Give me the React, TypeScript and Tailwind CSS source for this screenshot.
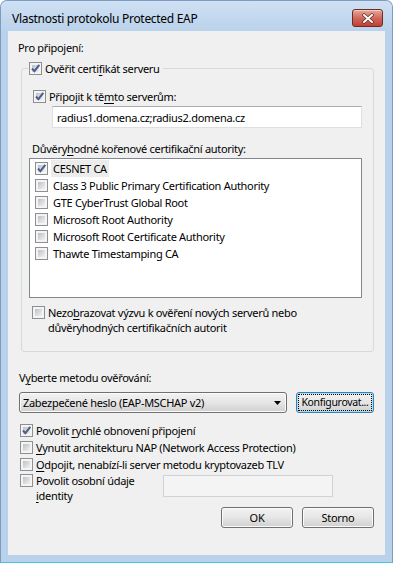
import type { ReactNode } from "react";

function CheckBox({ checked = false }: { checked?: boolean }) {
  return (
    <span className="relative flex h-[13px] w-[13px] shrink-0 border border-[#8e8f8f] bg-[#f4f4f4] p-[2px]">
      <span className="flex-1 bg-gradient-to-br from-[#bcc1c8] to-[#f2f2f3]" />
      {checked && (
        <svg className="absolute -left-[1px] -top-[1px]" width="13" height="13" viewBox="0 0 13 13">
          <path d="M3 6.5 L5.4 9.2 L10.3 2.8" fill="none" stroke="#4b5e8e" strokeWidth="2" />
        </svg>
      )}
    </span>
  );
}

function Key({ children }: { children: ReactNode }) {
  return <u className="underline underline-offset-[2px]">{children}</u>;
}

function WinButton({ children, focused = false }: { children: ReactNode; focused?: boolean }) {
  return (
    <div
      className={
        focused
          ? "flex h-[21px] w-[78px] items-center justify-center rounded-[3px] border border-[#3c7fb1] bg-gradient-to-b from-[#f2f2f2] via-[#e6e6e6] to-[#d0d0d0] p-[1px] shadow-[inset_0_0_0_1px_#9fe3fb]"
          : "flex h-[21px] w-[72px] items-center justify-center rounded-[3px] border border-[#707070] bg-gradient-to-b from-[#f2f2f2] via-[#e6e6e6] to-[#d0d0d0] shadow-[inset_0_0_0_1px_#fbfbfb]"
      }
    >
      {focused ? (
        <span className="flex h-full w-full items-center justify-center whitespace-nowrap border border-dotted border-black text-[10.5px] tracking-[-0.35px]">
          {children}
        </span>
      ) : (
        children
      )}
    </div>
  );
}

const cas = [
  "CESNET CA",
  "Class 3 Public Primary Certification Authority",
  "GTE CyberTrust Global Root",
  "Microsoft Root Authority",
  "Microsoft Root Certificate Authority",
  "Thawte Timestamping CA",
];

export default function App() {
  return (
    <div className="flex h-[563px] w-[393px] flex-col overflow-hidden rounded-t-[7px] border border-[#7d9cc0] border-b-[#4cc3ee] bg-[#b9d1ea] font-['Noto_Sans',sans-serif] text-[11px] leading-[15px] tracking-[-0.3px] text-black">
      {/* title bar */}
      <div className="flex h-[30px] shrink-0 items-start justify-between bg-gradient-to-b from-[#cfe0f3] to-[#bad2eb]">
        <span className="ml-[11px] mt-[10px] text-[12px] tracking-[-0.3px]">Vlastnosti protokolu Protected EAP</span>
        <div className="mr-[9px] mt-[8px] flex h-[18px] w-[31px] items-center justify-center rounded-[3px] border border-[#6b2a25] bg-gradient-to-b from-[#e6a89c] via-[#d0685a] to-[#c23f2f] shadow-[inset_0_1px_0_rgba(255,255,255,0.45)]">
          <svg width="14" height="11" viewBox="0 0 14 11">
            <path d="M3 2 L11 9 M11 2 L3 9" stroke="#5b2a27" strokeWidth="3.4" strokeLinecap="round" />
            <path d="M3 2 L11 9 M11 2 L3 9" stroke="#ffffff" strokeWidth="2" strokeLinecap="round" />
          </svg>
        </div>
      </div>

      {/* client area */}
      <div className="mx-[7px] mb-[7px] flex flex-1 flex-col bg-[#f0f0f0]">
        <p className="ml-[10px] mt-[9px]">Pro připojení:</p>

        <fieldset className="ml-[13px] mt-[6px] w-[353px] rounded-[3px] border border-[#d5dadf] pb-[16px]">
          <legend className="ml-[6px] flex items-center gap-[3px] pl-[1px] pr-[3px]">
            <CheckBox checked />
            <span>
              Ověřit certi<Key>f</Key>ikát serveru
            </span>
          </legend>

          <div className="ml-[11px] mt-[13px] flex items-center gap-[3px]">
            <CheckBox checked />
            <span>
              Připojit k tě<Key>m</Key>to serverům:
            </span>
          </div>
          <div className="ml-[30px] mt-[2px] flex h-[22px] w-[310px] items-center border border-[#dbdfe6] border-t-[#abadb3] bg-white pl-[4px]">
            radius1.domena.cz;radius2.domena.cz
          </div>

          <p className="ml-[10px] mt-[13px]">
            Důvěry<Key>h</Key>odné kořenové certifikační autority:
          </p>
          <div className="ml-[7px] mt-[2px] flex h-[140px] w-[333px] flex-col border border-[#828790] bg-white pl-[5px] pt-[1px]">
            {cas.map((ca, i) => (
              <div key={ca} className="flex h-[17px] items-center gap-[3px]">
                <CheckBox checked={i === 0} />
                <span className={i === 0 ? "bg-[#ececec] px-[2px] leading-[17px]" : "px-[2px]"}>{ca}</span>
              </div>
            ))}
          </div>

          <div className="ml-[10px] mt-[7px] flex items-start gap-[3px]">
            <span className="mt-[1px]">
              <CheckBox />
            </span>
            <span>
              Nezo<Key>b</Key>razovat výzvu k ověření nových serverů nebo
              <br />
              důvěryhodných certifikačních autorit
            </span>
          </div>
        </fieldset>

        <p className="ml-[11px] mt-[18px]">
          V<Key>y</Key>berte metodu ověřování:
        </p>
        <div className="ml-[11px] mt-[7px] flex gap-[9px]">
          <div className="flex h-[21px] w-[268px] items-center justify-between rounded-[3px] border border-[#707070] bg-gradient-to-b from-[#f2f2f2] via-[#e6e6e6] to-[#d0d0d0] pl-[3px] pr-[5px] shadow-[inset_0_0_0_1px_#fbfbfb]">
            <span>Zabezpečené heslo (EAP-MSCHAP v2)</span>
            <svg width="7" height="4" viewBox="0 0 7 4">
              <path d="M0 0 H7 L3.5 4 Z" fill="#000" />
            </svg>
          </div>
          <WinButton focused>Konfigurovat...</WinButton>
        </div>

        <div className="ml-[12px] mt-[9px] flex flex-col">
          <div className="flex h-[17px] items-center gap-[3px]">
            <CheckBox checked />
            <span>
              Povolit <Key>r</Key>ychlé obnovení připojení
            </span>
          </div>
          <div className="flex h-[17px] items-center gap-[3px]">
            <CheckBox />
            <span>
              <Key>V</Key>ynutit architekturu NAP (Network Access Protection)
            </span>
          </div>
          <div className="flex h-[17px] items-center gap-[3px]">
            <CheckBox />
            <span>
              <Key>O</Key>dpojit, nenabízí-li server metodu kryptovazeb TLV
            </span>
          </div>
          <div className="flex items-start">
            <div className="flex w-[143px] items-start gap-[3px]">
              <span className="mt-[1px]">
                <CheckBox />
              </span>
              <span>
                Povolit osobní údaje
                <br />
                <Key>i</Key>dentity
              </span>
            </div>
            <div className="mt-[2px] h-[22px] w-[170px] border border-[#cfd2d6] bg-[#f4f4f4]" />
          </div>
        </div>

        <div className="mr-[11px] mt-[4px] flex justify-end gap-[9px]">
          <WinButton>OK</WinButton>
          <WinButton>Storno</WinButton>
        </div>
      </div>
    </div>
  );
}
